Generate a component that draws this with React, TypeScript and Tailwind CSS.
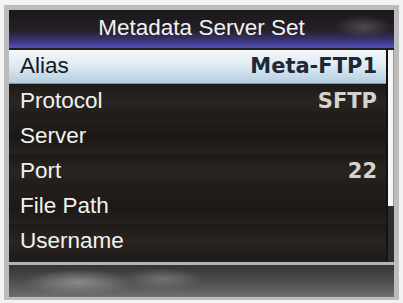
import React from "react";

const rows = [
  { label: "Protocol", value: "SFTP" },
  { label: "Server", value: "" },
  { label: "Port", value: "22" },
  { label: "File Path", value: "" },
  { label: "Username", value: "" },
];

export default function App() {
  return (
    <div className="w-[403px] h-[303px] bg-[#f3f3f3] pt-[5px] px-[4px] pb-[3px]">
      <div className="h-full bg-[#bcbcbc] pt-[5px] px-[5px] pb-[3px] flex flex-col">
        <div className="h-[38px] flex items-center justify-center bg-[radial-gradient(ellipse_28px_12px_at_92%_45%,#4e4852,transparent),linear-gradient(to_bottom,#1b171b,#262028_55%,#3a3478_80%,#5050b8)]">
          <span className="text-[22.5px] text-[#f2f2f2] font-['Liberation_Sans',sans-serif] leading-none pb-[2px]">
            Metadata Server Set
          </span>
        </div>
        <div className="h-[214px] flex bg-[#221e1c] pt-[2px]">
          <div className="w-[377px] flex flex-col">
            <div className="h-[34px] flex items-center justify-between pl-[11px] pr-[9px] bg-[linear-gradient(to_bottom,#f4f8fb,#dde9f2_50%,#b4cde0)] border-b border-[#7e95a8]">
              <span className="text-[22.5px] text-[#111a24] font-['Liberation_Sans',sans-serif] leading-none">
                Alias
              </span>
              <span className="text-[21px] font-bold text-[#1c2836] font-['DejaVu_Sans',sans-serif] leading-none">
                Meta-FTP1
              </span>
            </div>
            {rows.map((r, i) => (
              <div
                key={r.label}
                className={`h-[35px] flex items-center justify-between pl-[11px] pr-[9px] ${
                  i % 2 === 0
                    ? "bg-[linear-gradient(to_bottom,#1e1a18,#2a2522_50%,#1f1b19)]"
                    : "bg-[linear-gradient(to_bottom,#241f1d,#1c1816_50%,#26211f)]"
                }`}
              >
                <span className="text-[22.5px] text-[#f2f2f0] font-['Liberation_Sans',sans-serif] leading-none">
                  {r.label}
                </span>
                <span className="text-[21px] font-bold text-[#d4d4cc] font-['DejaVu_Sans',sans-serif] leading-none">
                  {r.value}
                </span>
              </div>
            ))}
          </div>
          <div className="w-[8px] bg-[#2e2c2c] border-l-[2px] border-[#141212] flex flex-col">
            <div className="h-[156px] bg-[#f6f6f6] border-r border-[#9a9a9a]" />
          </div>
        </div>
        <div className="h-[3px] bg-[#b4b4b4]" />
        <div className="flex-1 bg-[radial-gradient(ellipse_55px_13px_at_18%_55%,#8a8a8a,transparent),radial-gradient(ellipse_40px_11px_at_40%_45%,#727272,transparent),linear-gradient(to_bottom,#363636,#4a4a4a_45%,#6e6e6e)]" />
      </div>
    </div>
  );
}
